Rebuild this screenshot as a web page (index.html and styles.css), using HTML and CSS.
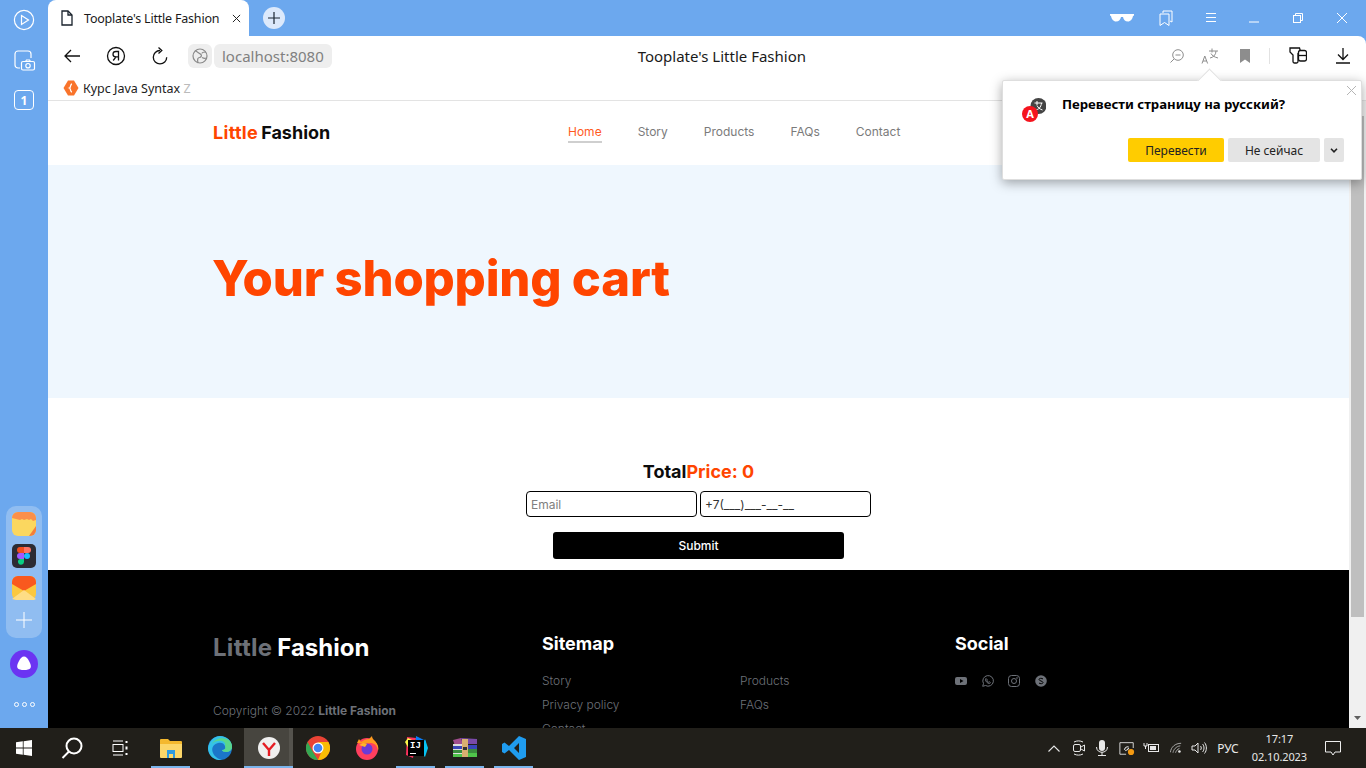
FILE: index.html
```html
<!DOCTYPE html>
<html lang="ru">
<head>
<meta charset="utf-8">
<title>Tooplate's Little Fashion</title>
<link rel="stylesheet" href="styles.css">
</head>
<body>
<div class="window">
  <aside class="sidebar">
    <div class="side-top">
      <svg class="si" viewBox="0 0 24 24" width="24" height="24" fill="none" stroke="#fff" stroke-width="1.2"><circle cx="12" cy="12" r="9.6"/><path d="M9.5 7.5l7 4.5-7 4.5z"/></svg>
      <svg class="si" viewBox="0 0 24 24" width="24" height="24" fill="none" stroke="#fff" stroke-width="1.2"><path d="M8 20H6a3 3 0 0 1-3-3V6a3 3 0 0 1 3-3h10a3 3 0 0 1 3 3v4"/><rect x="9.500" y="13.500" width="13" height="8.500" rx="1.500" fill="#6ca8ee"/><circle cx="16" cy="17.700" r="2.200"/><path d="M13.500 13.500l1-1.500h3l1 1.500"/></svg>
      <span class="one">1</span>
    </div>
    <div class="side-bottom">
      <div class="apps">
        <svg viewBox="0 0 24 24" width="24" height="24"><rect width="24" height="24" rx="6" fill="#fbd75f"/><path d="M0 6a6 6 0 0 1 6-6h12a6 6 0 0 1 6 6v2l-3 1-2-2-2 1-2-1-3 1-2-1-2 1-4-1z" fill="#fb8f4a"/><path d="M24 14v4a6 6 0 0 1-6 6h-1z" fill="#f47e3a"/></svg>
        <svg viewBox="0 0 24 24" width="24" height="24"><rect width="24" height="24" rx="5" fill="#2c2c34"/><path d="M8 3h4v6H8a3 3 0 0 1 0-6z" fill="#f24e1e"/><path d="M12 3h4a3 3 0 0 1 0 6h-4z" fill="#ff7262"/><path d="M8 9h4v6H8a3 3 0 0 1 0-6z" fill="#a259ff"/><circle cx="15" cy="12" r="3" fill="#1abcfe"/><path d="M8 15h4v3a3 3 0 1 1-4-3z" fill="#0acf83"/></svg>
        <svg viewBox="0 0 24 24" width="24" height="24"><rect width="24" height="24" rx="6" fill="#fbc83f"/><path d="M0 6a6 6 0 0 1 6-6h12a6 6 0 0 1 6 6v2l-12 7L0 8z" fill="#f9591e"/><path d="M0 23l12-9 12 9-2 1H4z" fill="#fedd85"/></svg>
        <svg class="apps-plus" viewBox="0 0 16 16" width="16" height="16" fill="none" stroke="#fff" stroke-width="1"><path d="M8 0v16M0 8h16"/></svg>
      </div>
      <svg class="alice" viewBox="0 0 28 28" width="28" height="28"><circle cx="14" cy="14" r="14" fill="#6b34f2"/><path d="M14 6.500c2 0 3.500 1.500 5 4.500 1.500 3 2.500 5 1.500 7-1 1.500-3.500 2-6.500 2s-5.500-.5-6.500-2c-1-2 0-4 1.500-7 1.500-3 3-4.500 5-4.500z" fill="#fff"/></svg>
      <div class="dots"><i></i><i></i><i></i></div>
    </div>
  </aside>
  <div class="browser">
    <div class="tabstrip">
      <div class="tab">
        <svg viewBox="0 0 14 16" width="14" height="16" fill="none" stroke="#18212b" stroke-width="1.300"><path d="M2 1h6l4 4v10H2z"/><path d="M8 1v4h4"/></svg>
        <span class="tab-title">Tooplate's Little Fashion</span>
        <svg viewBox="0 0 10 10" width="9" height="9" stroke="#222" stroke-width="1.100"><path d="M1 1l8 8M9 1l-8 8"/></svg>
      </div>
      <div class="newtab"><svg viewBox="0 0 12 12" width="12" height="12" stroke="#1c2733" stroke-width="1.200"><path d="M6 0v12M0 6h12"/></svg></div>
      <div class="win-controls">
        <svg class="glasses" viewBox="0 0 24 9" width="24" height="9" fill="#fff"><path d="M0 1h24v1.500l-1 .5c-.5 3-2.500 5.500-5 5.500-3 0-4.500-2-5-4.500h-2C10.500 6.500 9 8.500 6 8.500 3.500 8.500 1.500 6 1 3L0 2.500z"/></svg>
        <svg class="wc-b" viewBox="0 0 14 16" width="14" height="16" fill="none" stroke="#fff"><path d="M4 3V1h9v11l-2-1"/><path d="M1 4h9v11.500l-4.500-3-4.500 3z"/></svg>
        <svg class="wc-m" viewBox="0 0 12 10" width="12" height="10" stroke="#fff"><path d="M1 .5h10M1 4.500h10M1 8.500h10"/></svg>
        <svg class="wc-min" viewBox="0 0 10 2" width="10" height="2" stroke="#fff"><path d="M0 1h10"/></svg>
        <svg class="wc-r" viewBox="0 0 10 10" width="10" height="10" fill="none" stroke="#fff"><path d="M2.500 2.500V.5h7v7h-2"/><rect x=".5" y="2.500" width="7" height="7"/></svg>
        <svg class="wc-x" viewBox="0 0 10 10" width="10" height="10" stroke="#fff"><path d="M0 0l10 10M10 0L0 10"/></svg>
      </div>
    </div>
    <div class="toolbar">
      <div class="nav-left">
        <svg viewBox="0 0 16 14" width="16" height="14" fill="none" stroke="#111" stroke-width="1.300"><path d="M16 7H1M7 1L1 7l6 6"/></svg>
        <svg viewBox="0 0 20 20" width="20" height="20" fill="none" stroke="#111" stroke-width="1.300"><circle cx="10" cy="10" r="8.500"/><path d="M12.500 14.500v-9H10c-2 0-3 1-3 2.700 0 1.600 1 2.600 3 2.600h2.500M10 10.800l-2.800 3.700"/></svg>
        <svg viewBox="0 0 16 18" width="16" height="18" fill="none" stroke="#111" stroke-width="1.300"><path d="M8 3.500a6.700 6.700 0 1 0 6.700 6.700"/><path d="M6.500.5L9.800 3.500 6.500 6.500"/></svg>
      </div>
      <div class="address">
        <span class="globe"><svg viewBox="0 0 16 16" width="16" height="16" fill="none" stroke="#8a8a8a" stroke-width="1.200"><circle cx="8" cy="8" r="7"/><path d="M3 2.500c3 2 5 3 6 4 1 1 0 3-1.500 3S5 11 6 15M14 4c-2 0-4 0-4 1.500M10 9.500c1 .5 3 1 4 .5"/></svg></span>
        <span class="host">localhost:8080</span>
      </div>
      <div class="page-title">Tooplate's Little Fashion</div>
      <div class="tools">
        <svg class="t1" viewBox="0 0 14 14" width="14" height="14" fill="none" stroke="#8d8d8d"><circle cx="8" cy="6" r="5.300"/><path d="M5.500 6h5M4 10l-3.500 3.500"/></svg>
        <span class="t2"><svg viewBox="0 0 18 16" width="18" height="16" fill="none" stroke="#8d8d8d"><path d="M1 15.500l2.800-7.500 2.800 7.500M2 13h3.600"/><path d="M8 3h9M11 .5v4M9 10c3-.5 6-3 6-7M10 5.500c1 2 3 3.500 7 4.500"/></svg></span>
        <svg class="t3" viewBox="0 0 10 14" width="10" height="14" fill="#8d8d8d"><path d="M0 0h10v14L5 10.500 0 14z"/></svg>
        <span class="tsep"></span>
        <svg class="t4" viewBox="0 0 18 18" width="18" height="18" fill="none" stroke="#111" stroke-width="1.300"><path d="M1 1h9.500l1 3.500-2.500 2v8a1.500 1.500 0 0 1-1.500 1.500H5.500A1.500 1.500 0 0 1 4 14.500V8L1 5z"/><rect x="9.500" y="3.500" width="8" height="10.500" rx="2" fill="#fff"/><path d="M9.500 8.500h8"/></svg>
        <svg class="t5" viewBox="0 0 14 16" width="14" height="16" fill="none" stroke="#111" stroke-width="1.300"><path d="M7 0v11M2 6.500l5 5 5-5M0 15h14"/></svg>
      </div>
    </div>
    <div class="bookmarks">
      <svg viewBox="0 0 16 16" width="16" height="16"><path d="M5 .5h6L15.500 8 11 15.500H5L.5 8z" fill="#f9742b"/><path d="M9 4C7 4 8 7.500 6.500 8 8 8.500 7 12 9 12" fill="none" stroke="#fff" stroke-width="1.300"/></svg>
      <span class="bm-fade">Курс Java Syntax <span class="bm-z">Z</span></span>
    </div>
    <div class="viewport">
      <div class="page">
        <header class="site-header">
          <a class="logo"><strong class="accent">Little</strong> <strong>Fashion</strong></a>
          <nav class="nav">
            <a class="nav-link active">Home</a>
            <a class="nav-link">Story</a>
            <a class="nav-link">Products</a>
            <a class="nav-link">FAQs</a>
            <a class="nav-link">Contact</a>
          </nav>
        </header>
        <section class="hero"><h1>Your shopping cart</h1></section>
        <section class="cart">
          <h2 class="total">Total<span class="accent">Price: 0</span></h2>
          <form class="cart-form">
            <div class="inputs">
              <input class="field" type="text" placeholder="Email">
              <input class="field phone" type="text" value="+7(___)___-__-__">
            </div>
            <button class="submit" type="button">Submit</button>
          </form>
        </section>
        <footer class="footer">
          <div class="f-brand">
            <div class="f-logo"><strong class="dim">Little</strong> <strong>Fashion</strong></div>
            <p class="copy">Copyright © 2022 <strong>Little Fashion</strong></p>
          </div>
          <div class="f-sitemap">
            <h3>Sitemap</h3>
            <div class="f-links">
              <a>Story</a><a>Products</a>
              <a>Privacy policy</a><a>FAQs</a>
              <a>Contact</a>
            </div>
          </div>
          <div class="f-social">
            <h3>Social</h3>
            <div class="f-icons">
              <svg viewBox="0 0 12 12" width="12" height="12" fill="#6d7178"><path fill-rule="evenodd" d="M2 2h8a2 2 0 0 1 2 2v4a2 2 0 0 1-2 2H2a2 2 0 0 1-2-2V4a2 2 0 0 1 2-2zm3 2v4l3.500-2z"/></svg>
              <svg viewBox="0 0 12 12" width="12" height="12" fill="none" stroke="#6d7178"><path d="M.7 11.300l.8-2.800A5.300 5.300 0 1 1 3.500 10.500z"/><path d="M4 3.500l-.5 1c0 2 2 4 4 4l1-.8-1.300-1-.7.5c-.7-.3-1.200-.8-1.500-1.500l.5-.7z"/></svg>
              <svg viewBox="0 0 12 12" width="12" height="12" fill="none" stroke="#6d7178"><rect x=".5" y=".5" width="11" height="11" rx="3"/><circle cx="6" cy="6" r="2.500"/><circle cx="9" cy="3" r=".4"/></svg>
              <svg viewBox="0 0 12 12" width="12" height="12"><circle cx="6" cy="6" r="5.800" fill="#6d7178"/><path d="M8 4c-1-1-4-1-4 .5S8 6 8 7.500 5 9 4 8" fill="none" stroke="#000"/></svg>
            </div>
          </div>
        </footer>
      </div>
      <div class="scrollbar">
        <svg class="sb-up" viewBox="0 0 7 4" width="7" height="4" fill="#606060"><path d="M0 4l3.500-4L7 4z"/></svg>
        <div class="thumb"></div>
        <svg class="sb-down" viewBox="0 0 7 4" width="7" height="4" fill="#606060"><path d="M0 0l3.500 4L7 0z"/></svg>
      </div>
    </div>
    <div class="popup">
      <span class="popup-notch"></span>
      <svg class="popup-x" viewBox="0 0 9 9" width="9" height="9" stroke="#b5b5b5"><path d="M0 0l9 9M9 0L0 9"/></svg>
      <div class="popup-head">
        <svg class="popup-icon" viewBox="0 0 24 24" width="24" height="24"><circle cx="16.500" cy="8" r="8" fill="#444"/><path d="M12.500 5h8M15 3v4M13.500 12c3-.5 5.500-2.500 6-7M15 7.500c1 2 2.500 3.500 5.500 4.500" fill="none" stroke="#fff"/><circle cx="8" cy="16" r="8" fill="#f5141e"/></svg>
        <span class="popup-a">A</span>
        <div class="popup-text">Перевести страницу на русский?</div>
      </div>
      <div class="popup-actions">
        <button class="btn btn-y" type="button">Перевести</button>
        <button class="btn btn-g" type="button">Не сейчас</button>
        <button class="btn btn-more" type="button"><svg viewBox="0 0 8 5" width="8" height="5" fill="none" stroke="#222" stroke-width="1.600"><path d="M1 .8L4 3.800 7 .8"/></svg></button>
      </div>
    </div>
  </div>
</div>
<div class="taskbar">
  <div class="tb-left">
    <span class="tb-item sys"><svg viewBox="0 0 16 16" width="16" height="16" fill="#fff"><path d="M0 2.300l6.800-1v6.300H0zM7.600 1.200L16 0v7.600H7.600zM0 8.400h6.800v6.300l-6.800-1zM7.600 8.400H16V16l-8.400-1.200z"/></svg></span>
    <span class="tb-item sys"><svg viewBox="0 0 22 22" width="22" height="22" fill="none" stroke="#fff" stroke-width="2"><circle cx="13" cy="9" r="7.500"/><path d="M8 14.500L1.500 21"/></svg></span>
    <span class="tb-item sys"><svg viewBox="0 0 16 16" width="16" height="16" fill="none" stroke="#fff"><path d="M1 1h10M1 15h10"/><rect x="1" y="4.500" width="10" height="7"/><path d="M14.500 1v2M14.500 6.500v3M14.500 13v2" stroke-width="2"/></svg></span>
    <span class="tb-item run"><svg viewBox="0 0 22 20" width="22" height="20"><path d="M0 2a1 1 0 0 1 1-1h7l2 2h11a1 1 0 0 1 1 1v3H0z" fill="#f4b82e"/><path d="M0 6h22v13a1 1 0 0 1-1 1H1a1 1 0 0 1-1-1z" fill="#fcd669"/><path d="M7 12h8v8H7z" fill="#2f9ae0"/><path d="M9 16h4v4H9z" fill="#fcd669"/></svg></span>
    <span class="tb-item"><svg viewBox="0 0 24 24" width="24" height="24"><circle cx="12" cy="12" r="12" fill="#1b76c9"/><path d="M0 12C1 5 6 0 12 0c7 0 12 5 12 11 0 3-3 5-6 5-2 0-4-1-4-2 3 0 4-2 3-4-1-3-4-4-7-3-5 1-7 6-5 10 1 3 5 6 9 7-8 1-14-5-14-12z" fill="#35c1e8"/><path d="M24 11c0 3-3 5-6 5-2 0-4-1-4-2 3 0 4-2 3-4C19 4 8 3 4 8 8 0 24 0 24 11z" fill="#5ad68c"/></svg></span>
    <span class="tb-item run active-item"><svg viewBox="0 0 22 22" width="22" height="22"><circle cx="11" cy="11" r="11" fill="#efefef"/><path d="M5 6l6 7 6-7M11 13v6" fill="none" stroke="#e51c23" stroke-width="2.400"/></svg></span>
    <span class="tb-item"><svg viewBox="0 0 24 24" width="24" height="24"><circle cx="12" cy="12" r="12" fill="#ea4335"/><path d="M12 24a12 12 0 0 0 10.400-18H12l5 6z" fill="#fbbc04"/><path d="M1.600 6L7 16l5 8A12 12 0 0 1 1.600 6z" fill="#34a853"/><circle cx="12" cy="12" r="5.500" fill="#fff"/><circle cx="12" cy="12" r="4.300" fill="#4285f4"/></svg></span>
    <span class="tb-item"><svg viewBox="0 0 24 24" width="24" height="24"><circle cx="12" cy="13" r="11" fill="#ff3f5e"/><path d="M2 7l2-4 2 3c3-2 5-3 8-3l3-3c0 2 1 3 3 5 3 3 4 7 3 10-1-8-7-9-12-7z" fill="#ff9a1f"/><circle cx="12" cy="13" r="5.500" fill="#6b3bd6"/><path d="M4 9l6 2 2-3-4-1z" fill="#ffb52a"/></svg></span>
    <span class="tb-item run"><svg viewBox="0 0 24 24" width="24" height="24"><path d="M3 1l9 1-3 20-7-3z" fill="#fe315d"/><path d="M12 0l10 5-3 14-8-3z" fill="#087cfa"/><path d="M21 3l3 9-3 9-4-4z" fill="#07c3f2"/><path d="M1 6l3-4 6 3-5 8z" fill="#fcf84a"/><rect x="4" y="4" width="16" height="16" fill="#000"/><path d="M6 17h6v1H6z" fill="#fff"/></svg><span class="ij">IJ</span></span>
    <span class="tb-item run"><svg viewBox="0 0 24 20" width="24" height="20"><path d="M0 2l8-2 2 6-8 2z" fill="#a04d8e"/><path d="M8 0l16 1v5H10z" fill="#7a4aa8"/><path d="M0 7h24v4H0z" fill="#3a46b8"/><path d="M0 11h24v4H0z" fill="#3a8c3d"/><path d="M0 15h24v4H0z" fill="#4fc44a"/><path d="M9 1h6v18H9z" fill="#d8b070"/><path d="M10 9h4v3h-4z" fill="#333"/><path d="M0 6h9v2H0zM0 11h9v1H0zM0 15h9v1H0z" fill="#ddd"/></svg></span>
    <span class="tb-item run"><svg viewBox="0 0 24 24" width="24" height="24"><path d="M17 0l7 3v18l-7 3L7 14l-4.500 3.500L0 16V8l2.500-1.500L7 10zM17 7l-5 5 5 5z" fill="#1f9cf0"/></svg></span>
  </div>
  <div class="tb-right">
    <svg class="tr-chev" viewBox="0 0 12 7" width="12" height="7" fill="none" stroke="#e8e8e8" stroke-width="1.100"><path d="M.5 6.500L6 1l5.500 5.500"/></svg>
    <svg class="tr-video" viewBox="0 0 12 16" width="12" height="16" fill="none" stroke="#e8e8e8"><path d="M1 2c3-1.500 6-1.500 9 0M1 14c3 1.500 6 1.500 9 0"/><rect x=".5" y="4.500" width="7" height="7" rx="1.500"/><path d="M8 7l3.500-2v6L8 9"/></svg>
    <svg class="tr-mic" viewBox="0 0 12 16" width="12" height="16" fill="#e8e8e8"><rect x="3" y="0" width="6" height="11" rx="3"/><path d="M.5 7c0 7 11 7 11 0M6 12v3M2 15.500h8" fill="none" stroke="#e8e8e8"/></svg>
    <svg class="tr-cast" viewBox="0 0 18 16" width="16" height="16" fill="none" stroke="#e8e8e8"><path d="M1 15V2h15v6M1 15h7"/><path d="M6 10c1-3 3-4 5-3M11 8c-1 2-3 3-4 3" stroke-width="1.200"/><circle cx="13.500" cy="12.500" r="3.500" fill="#f59a12" stroke="none"/></svg>
    <svg class="tr-batt" viewBox="0 0 16 12" width="16" height="12" fill="none" stroke="#e8e8e8"><path d="M1 1v3h3V1M2.500 4v3"/><rect x="5.500" y="2.500" width="10" height="7"/><rect x="7" y="4" width="6" height="4" fill="#e8e8e8" stroke="none"/></svg>
    <svg class="tr-wifi" viewBox="0 0 14 12" width="12" height="12" fill="none" stroke="#bbb"><path d="M.5 11C1 5 6 .5 13 .5M3.500 11.500C4 8 7 4 12 3.500M6.500 11.500c.5-2 2-4 4.500-5"/><circle cx="11" cy="10" r="1.500" fill="#e8e8e8" stroke="none"/></svg>
    <svg class="tr-sound" viewBox="0 0 16 14" width="16" height="14" fill="none" stroke="#e8e8e8"><path d="M1 5v4h3l3 3V2L4 5zM9.500 5c1 1 1 3 0 4M11.500 3c2 2 2 6 0 8M13.500 1.500c2.500 3 2.500 8 0 11"/></svg>
    <span class="lang">РУС</span>
    <div class="clock"><span>17:17</span><span>02.10.2023</span></div>
    <svg class="notif" viewBox="0 0 16 15" width="16" height="15" fill="none" stroke="#eee"><path d="M.5.500h15v10.500H10l-2 3-2-3H.5z"/></svg>
  </div>
</div>
</body>
</html>
```

FILE: styles.css
```css
* { box-sizing: border-box; }
html, body { margin: 0; height: 768px; overflow: hidden; }
body { background: #6ca8ee; font-family: "Noto Sans", "Open Sans", sans-serif; display: flex; flex-direction: column; color: #111; }

.window { height: 728px; display: flex; flex: none; }

.sidebar { width: 48px; flex: none; display: flex; flex-direction: column; justify-content: space-between; align-items: center; padding: 8px 0 21px 0; }
.side-top { display: flex; flex-direction: column; align-items: center; gap: 16px; }
.side-top .si { display: block; width: 24px; height: 24px; }
.one { width: 20px; height: 20px; border: 1.500px solid #fff; border-radius: 4px; color: #fff; font-size: 12px; font-weight: 700; display: flex; align-items: center; justify-content: center; margin-top: 2px; }
.side-bottom { display: flex; flex-direction: column; align-items: center; }
.apps { width: 36px; height: 132px; background: #90bdf1; border-radius: 10px; padding: 6px 0; display: flex; flex-direction: column; align-items: center; gap: 8px; margin-bottom: 12px; }
.apps-plus { margin-top: 4px; }
.alice { margin-bottom: 24px; }
.dots { display: flex; gap: 3px; height: 5px; }
.dots i { width: 5px; height: 5px; border: 1px solid #fff; border-radius: 50%; }

.browser { flex: 1; display: flex; flex-direction: column; min-width: 0; position: relative; }
.tabstrip { height: 36px; display: flex; align-items: flex-start; flex: none; }
.tab { width: 201px; height: 36px; background: #fff; border-radius: 8px 8px 0 0; display: flex; align-items: center; padding: 0 8px 0 12px; gap: 10px; }
.tab svg { flex: none; }
.tab-title { font-size: 12.500px; letter-spacing: -0.2px; color: #1a1a1a; white-space: nowrap; flex: 1; }
.newtab { width: 22px; height: 22px; border-radius: 50%; background: #dce9fb; margin: 7px 0 0 14px; display: flex; align-items: center; justify-content: center; }
.win-controls { margin-left: auto; height: 36px; display: flex; align-items: center; }
.win-controls svg { flex: none; }
.glasses { margin-right: 25px; margin-top: -1px; }
.wc-b { margin-right: 32px; }
.wc-m { margin-right: 32px; }
.wc-min { margin-right: 34px; margin-top: 8px; }
.wc-r { margin-right: 34px; }
.wc-x { margin-right: 19px; }

.toolbar { height: 42px; background: #fff; display: flex; align-items: center; padding: 0 0 2px 16px; flex: none; border-radius: 0 8px 0 0; }
.nav-left { display: flex; align-items: center; gap: 26px; }
.address { display: flex; align-items: center; gap: 2px; margin-left: 20px; }
.globe { width: 24px; height: 24px; background: #eeeeee; border-radius: 6px; display: flex; align-items: center; justify-content: center; }
.host { height: 24px; padding: 0 8px; background: #eeeeee; border-radius: 6px; font-size: 15px; color: #808080; display: flex; align-items: center; }
.page-title { flex: 1; text-align: center; font-size: 15px; color: #1a1a1a; white-space: nowrap; margin-left: 82px; }
.tools { width: 336px; display: flex; align-items: center; justify-content: flex-end; padding-right: 16px; flex: none; }
.t1 { margin-right: 17px; }
.t2 { margin-right: 21px; display: flex; }
.t3 { margin-right: 19px; }
.tsep { width: 1px; height: 16px; background: #e2e2e2; margin-right: 19px; }
.t4 { margin-right: 29px; }

.bookmarks { height: 23px; background: #fff; border-bottom: 1px solid #e3e3e3; display: flex; align-items: center; gap: 4px; padding: 0 0 2px 15px; flex: none; }
.bm-fade { font-size: 12.500px; color: #222; white-space: nowrap; }
.bm-z { color: #bbb; }

.viewport { flex: 1; display: flex; min-height: 0; overflow: hidden; }
.page { flex: 1; min-width: 0; background: #fff; font-family: Inter, sans-serif; display: flex; flex-direction: column; }
.site-header { height: 64px; padding: 0 165px; display: flex; align-items: center; flex: none; }
.logo { font-size: 18px; color: #0c0c0c; width: 320px; margin-top: -1px; word-spacing: -2px; }
.logo .accent { letter-spacing: .3px; }
.accent { color: #ff4500; font-weight: 700; }
.nav { display: flex; gap: 36px; margin-left: 35px; margin-top: 0; }
.nav-link { font-size: 12px; color: #7b7b7b; padding-bottom: 2px; border-bottom: 2px solid transparent; }
.nav-link.active { color: #ff5a1f; border-bottom-color: #cfcfcf; }

.hero { height: 233px; background: #eff7fe; padding: 0 165px; display: flex; align-items: center; flex: none; }
.hero h1 { margin: 0 0 6px -1px; font-size: 49px; font-weight: 800; color: #ff4500; letter-spacing: -0.2px; }

.cart { height: 172px; flex: none; display: flex; flex-direction: column; align-items: center; padding-top: 62px; }
.total { margin: 0 0 7px; font-size: 18px; line-height: 24px; font-weight: 700; color: #0c0c0c; }
.cart-form { display: flex; flex-direction: column; align-items: center; gap: 15px; }
.inputs { display: flex; gap: 3px; }
.field { width: 171px; height: 26px; border: 1px solid #000; border-radius: 4px; padding: 0 4px; font-family: Inter, sans-serif; font-size: 12px; color: #333; background: #fff; outline: none; }
.field::placeholder { color: #808080; }
.submit { width: 291px; height: 27px; background: #000; color: #fff; border: 0; border-radius: 3px; font-family: Inter, sans-serif; font-size: 12px; font-weight: 500; }

.footer { flex: 1; background: #000; padding: 60px 0 0 165px; display: flex; min-height: 0; overflow: hidden; color: #fff; }
.f-brand { width: 329px; flex: none; }
.f-logo { font-size: 24px; line-height: 32px; margin-top: 2px; word-spacing: -2px; }
.dim { color: #6d7178; letter-spacing: .3px; }
.copy { margin: 39px 0 0; font-size: 12px; font-weight: 300; color: #6d7178; }
.copy strong { font-weight: 700; color: #6d7178; }
.f-sitemap { width: 413px; flex: none; }
h3 { margin: 0; font-size: 18px; line-height: 28px; font-weight: 700; color: #fff; }
.f-links { display: grid; grid-template-columns: 198px 1fr; row-gap: 8px; margin-top: 15px; font-size: 12px; font-weight: 300; color: #6d7178; }
.f-links a { line-height: 16px; }
.f-icons { display: flex; gap: 14.500px; margin-top: 17px; }

.scrollbar { width: 17px; flex: none; background: #f0f0f0; display: flex; flex-direction: column; align-items: center; padding: 5px 0 8px; }
.sb-up { flex: none; margin-bottom: 6px; }
.thumb { width: 13px; height: 501px; flex: none; background: #bfbfbf; }
.sb-down { flex: none; margin-top: auto; }

.popup { position: absolute; left: 954px; top: 80px; width: 360px; height: 100px; background: #fff; border: 1px solid #dedede; border-radius: 2px; box-shadow: 0 3px 12px rgba(0,0,0,.35); padding: 14px 17px 0 19px; }
.popup-notch { position: absolute; left: 197.500px; top: -9.500px; width: 17px; height: 17px; background: #fff; border-left: 1px solid #e2e2e2; border-top: 1px solid #e2e2e2; transform: rotate(45deg); }
.popup-x { position: absolute; right: 5px; top: 5px; }
.popup-head { display: flex; gap: 16px; position: relative; height: 43px; }
.popup-icon { flex: none; margin-top: 3px; }
.popup-a { position: absolute; left: 0; top: 11px; width: 16px; text-align: center; color: #fff; font-size: 11px; font-weight: 700; line-height: 16px; }
.popup-text { font-size: 13.200px; font-weight: 700; color: #000; line-height: 18px; }
.popup-actions { display: flex; justify-content: flex-end; gap: 4px; }
.btn { height: 24px; border: 0; border-radius: 2px; font-family: "Noto Sans", sans-serif; font-size: 12px; color: #222; padding: 0; display: flex; align-items: center; justify-content: center; }
.btn-y { width: 96px; background: #fc0; }
.btn-g { width: 92px; background: #e4e4e4; }
.btn-more { width: 20px; background: #e4e4e4; }

.taskbar { height: 40px; flex: none; background: #211f1a; display: flex; justify-content: space-between; }
.tb-left { display: flex; }
.tb-item { width: 49px; height: 40px; display: flex; align-items: center; justify-content: center; position: relative; }
.tb-item.sys { width: 48px; }
.tb-item.sys:nth-child(3) { margin-right: 2px; }
.tb-item.run::after { content: ""; position: absolute; left: 5px; right: 5px; bottom: 0; height: 2px; background: #7ab4ec; }
.tb-item.active-item { background: #47453f; border-right: 4px solid #55534d; padding-left: 4px; }
.tb-item.active-item::after { left: 0; right: -4px; }
.ij { position: absolute; left: 19px; top: 13px; font-family: "Liberation Mono", monospace; font-size: 9px; font-weight: 700; color: #fff; line-height: 10px; }
.tb-right { display: flex; align-items: center; }
.tr-video { margin-left: 13px; }
.tr-mic { margin-left: 11px; }
.tr-cast { margin-left: 11px; }
.tr-batt { margin-left: 8px; }
.tr-wifi { margin-left: 11px; }
.tr-sound { margin-left: 9px; }
.lang { font-size: 12px; color: #e8e8e8; margin-left: 10px; }
.clock { display: flex; flex-direction: column; align-items: center; font-size: 11px; line-height: 18px; letter-spacing: -0.1px; color: #e8e8e8; margin-left: 13px; }
.notif { margin: 0 25px 0 18px; }
```
